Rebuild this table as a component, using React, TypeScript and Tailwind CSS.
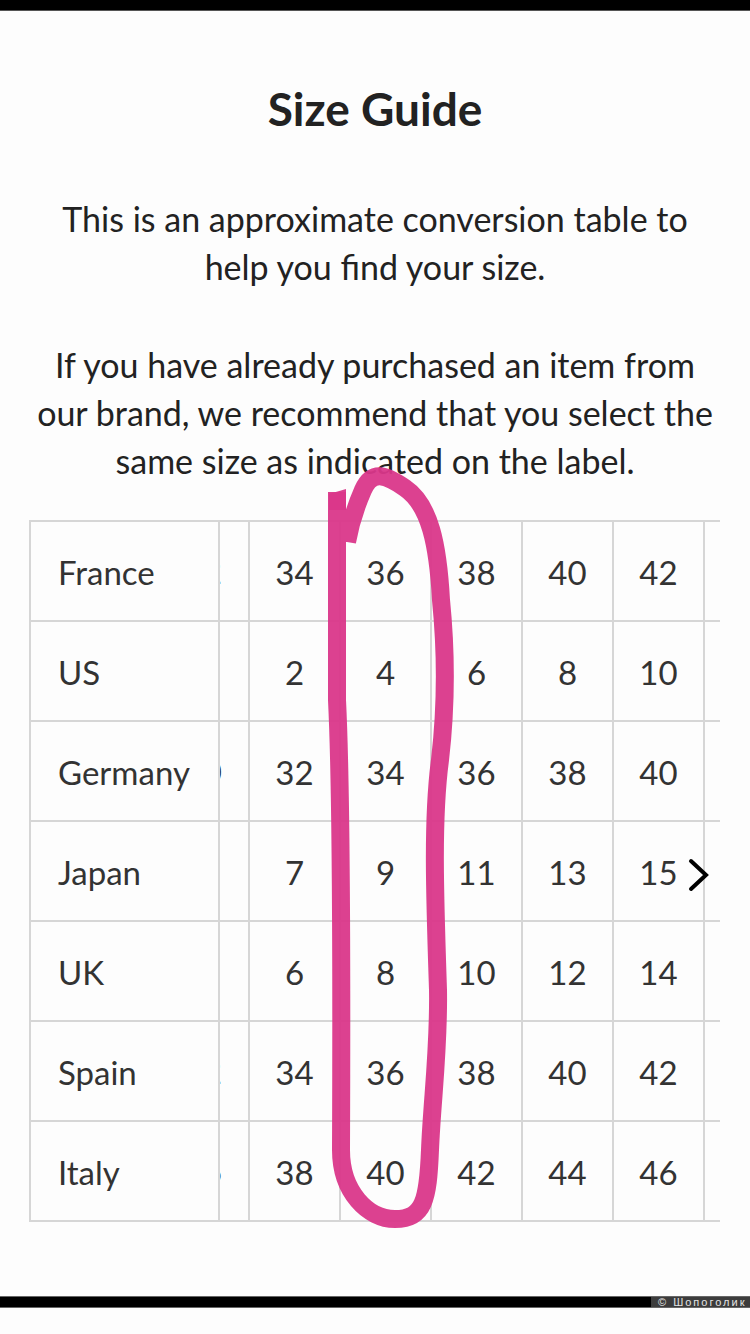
import React from "react";

const rows: { name: string; frag: string; vals: string[] }[] = [
  { name: "France", frag: "32", vals: ["34", "36", "38", "40", "42"] },
  { name: "US", frag: "", vals: ["2", "4", "6", "8", "10"] },
  { name: "Germany", frag: "30", vals: ["32", "34", "36", "38", "40"] },
  { name: "Japan", frag: "", vals: ["7", "9", "11", "13", "15"] },
  { name: "UK", frag: "", vals: ["6", "8", "10", "12", "14"] },
  { name: "Spain", frag: "32", vals: ["34", "36", "38", "40", "42"] },
  { name: "Italy", frag: "36", vals: ["38", "40", "42", "44", "46"] },
];

export default function App() {
  return (
    <div
      className="relative flex h-[1334px] w-[750px] flex-col overflow-hidden bg-[#fdfdfd]"
      style={{ fontFamily: "Lato, 'Liberation Sans', sans-serif" }}
    >
      <div className="h-[11px] w-full border-b border-[#555] bg-black" />

      <div className="flex flex-col items-center pt-[74px]">
        <h1 className="text-[46px] font-bold leading-[48px] text-[#222]">Size Guide</h1>
        <p className="mt-[62px] whitespace-nowrap text-center text-[34px] leading-[48px] text-[#222]">
          This is an approximate conversion table to
          <br />
          help you find your size.
        </p>
        <p className="mt-[50px] whitespace-nowrap text-center text-[34px] leading-[48px] text-[#222]">
          If you have already purchased an item from
          <br />
          our brand, we recommend that you select the
          <br />
          same size as indicated on the label.
        </p>
      </div>

      <div className="relative ml-[29px] mt-[35px] w-[691px] overflow-hidden border-l-2 border-t-2 border-[#d6d6d6]">
        {rows.map((r) => (
          <div key={r.name} className="flex h-[100px] border-b-2 border-[#d6d6d6] text-[33px] text-[#333]">
            <div className="flex w-[189px] shrink-0 items-center border-r-2 border-[#d6d6d6] pl-[27px] pt-[4px]">
              {r.name}
            </div>
            <div className="relative w-[30px] shrink-0 overflow-hidden border-r-2 border-[#d6d6d6]">
              {r.frag && (
                <span className="absolute right-[26px] top-1/2 -translate-y-1/2 leading-none text-[#333]">
                  {r.frag}
                </span>
              )}
            </div>
            {r.vals.map((v, i) => (
              <div
                key={i}
                className="flex w-[91px] shrink-0 items-center justify-center border-r-2 border-[#d6d6d6] pt-[4px]"
              >
                {v}
              </div>
            ))}
            <div className="w-[15px] shrink-0" />
          </div>
        ))}
        <svg
          className="absolute left-[655px] top-[336px]"
          width="26"
          height="34"
          viewBox="0 0 26 34"
          fill="none"
        >
          <path d="M5 3 L20 17 L5 31" stroke="#000" strokeWidth="4" strokeLinecap="round" strokeLinejoin="miter" />
        </svg>
      </div>

      <div className="flex-1" />

      <div className="flex h-[12px] w-full border-y border-[#666] bg-black">
        <div className="flex-1" />
        <div className="flex w-[99px] items-center bg-[#3c3c3c] pl-[7px]">
          <span
            className="text-[11px] leading-none tracking-[2px] text-[#e4e4e4]"
            style={{ fontFamily: "'Liberation Sans', sans-serif" }}
          >
            © Шопоголик
          </span>
        </div>
      </div>
      <div className="h-[26px]" />

      <svg
        className="pointer-events-none absolute left-0 top-0"
        width="750"
        height="1334"
        viewBox="0 0 750 1334"
        fill="none"
      >
        <path
          d="M337 492 L337 700 C340 760 342 900 341 1150 C341 1192 368 1219 395 1219 C424 1219 428 1200 430 1150 C432 1100 439 1050 438 990 C435 900 432 820 440 760 C447 700 446 650 441 600 C438 545 430 505 405 488 C385 474 372 470 363 490 C356 506 350 525 347 542"
          stroke="#da378a"
          strokeWidth="18"
          strokeLinecap="butt"
          strokeLinejoin="round"
          opacity="0.95"
        />
        <path d="M329 494 L346 489 L346 510 L329 510 Z" fill="#da378a" opacity="0.95" />
      </svg>
    </div>
  );
}
